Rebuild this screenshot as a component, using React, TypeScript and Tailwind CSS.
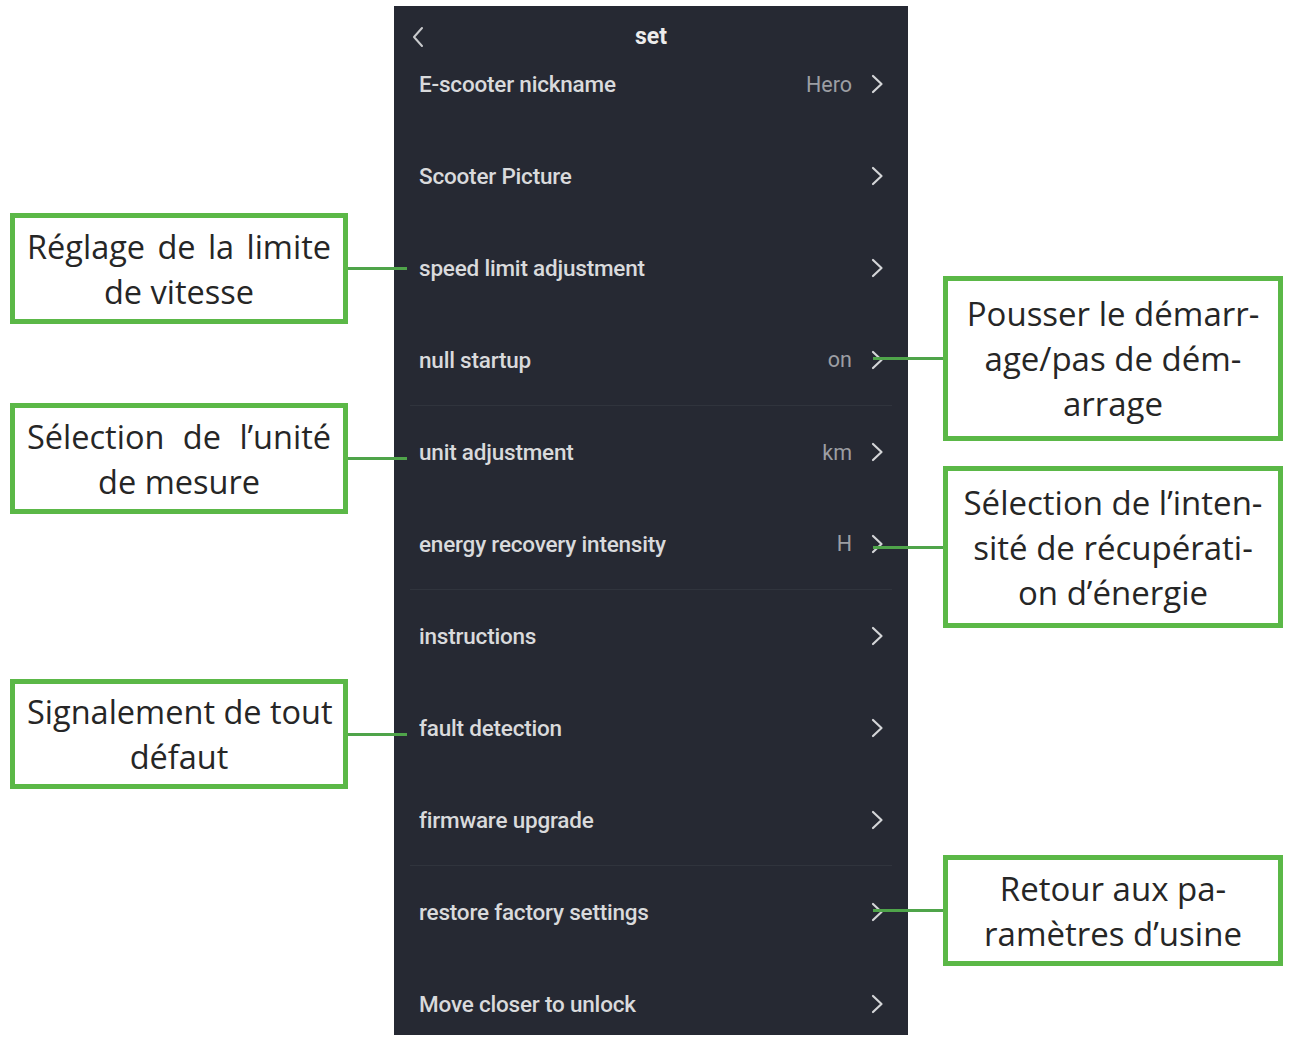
const GREEN = "border-[#5bb847]";

type Row = { label: string; value?: string; divider?: boolean };

const rows: Row[] = [
  { label: "E-scooter nickname", value: "Hero" },
  { label: "Scooter Picture" },
  { label: "speed limit adjustment" },
  { label: "null startup", value: "on", divider: true },
  { label: "unit adjustment", value: "km" },
  { label: "energy recovery intensity", value: "H", divider: true },
  { label: "instructions" },
  { label: "fault detection" },
  { label: "firmware upgrade", divider: true },
  { label: "restore factory settings" },
  { label: "Move closer to unlock" },
];

function Chevron() {
  return (
    <svg width="14" height="20" viewBox="0 0 14 20" className="shrink-0">
      <path d="M3 2 L11.5 10 L3 18" fill="none" stroke="#d4d5d8" strokeWidth="2.2" strokeLinecap="round" strokeLinejoin="round" />
    </svg>
  );
}

function LeftNote({ first, second, top, h }: { first: string; second: string; top: string; h: string }) {
  return (
    <div className={`flex items-center ${top}`}>
      <div className={`ml-[10px] w-[338px] shrink-0 ${h} border-[5px] ${GREEN} bg-white flex flex-col justify-center px-[12px] text-[32.5px] leading-[45px] text-[#262626]`}>
        <div className="text-justify [text-align-last:justify] whitespace-nowrap">{first}</div>
        <div className="text-center">{second}</div>
      </div>
      <div className="relative z-10 w-[59px] h-[3px] bg-[#4fa44a] shrink-0" />
    </div>
  );
}

function RightNote({ lines, top, h }: { lines: string[]; top: string; h: string }) {
  return (
    <div className={`flex items-center ${top}`}>
      <div className="relative z-10 w-[70px] h-[3px] bg-[#4fa44a] shrink-0" />
      <div className={`w-[340px] shrink-0 ${h} border-[5px] ${GREEN} bg-white flex flex-col justify-center items-center text-[33px] leading-[45px] text-[#262626]`}>
        {lines.map((l) => (
          <div key={l} className="whitespace-nowrap">{l}</div>
        ))}
      </div>
    </div>
  );
}

export default function App() {
  return (
    <div className="w-[1289px] h-[1037px] bg-white flex overflow-hidden font-['Open_Sans',sans-serif]">
      {/* left callouts */}
      <div className="w-[394px] shrink-0 flex flex-col">
        <LeftNote first="Réglage de la limite" second="de vitesse" top="mt-[213px]" h="h-[111px]" />
        <LeftNote first="Sélection de l’unité" second="de mesure" top="mt-[79px]" h="h-[111px]" />
        <LeftNote first="Signalement de tout" second="défaut" top="mt-[165px]" h="h-[110px]" />
      </div>

      {/* phone screen */}
      <div className="w-[514px] h-[1029px] mt-[6px] shrink-0 bg-[#262933] overflow-hidden flex flex-col font-['Roboto',sans-serif]">
        <div className="relative h-[32px] shrink-0 flex justify-center items-start pt-[19px]">
          <svg width="14" height="22" viewBox="0 0 14 22" className="absolute left-[17px] top-[20px]">
            <path d="M11 2 L3 11 L11 20" fill="none" stroke="#c9cacd" strokeWidth="2" strokeLinecap="round" strokeLinejoin="round" />
          </svg>
          <span className="text-[23px] leading-none font-bold text-[#ececec]">set</span>
        </div>
        {rows.map((r) => (
          <div key={r.label} className="h-[92px] shrink-0 px-[16px]">
            <div className={`h-full flex items-center pl-[9px] pr-[8px] ${r.divider ? "border-b border-[#30343d]" : ""}`}>
              <span className="flex-1 text-[22.5px] font-medium text-[#d9dadc] tracking-[-0.2px] pt-[2px]">{r.label}</span>
              {r.value && <span className="text-[21.5px] text-[#9c9ea3] mr-[18px] pt-[2px]">{r.value}</span>}
              <Chevron />
            </div>
          </div>
        ))}
      </div>

      {/* right callouts */}
      <div className="-ml-[35px] flex flex-col">
        <RightNote lines={["Pousser le démarr-", "age/pas de dém-", "arrage"]} top="mt-[276px]" h="h-[165px]" />
        <RightNote lines={["Sélection de l’inten-", "sité de récupérati-", "on d’énergie"]} top="mt-[25px]" h="h-[162px]" />
        <RightNote lines={["Retour aux pa-", "ramètres d’usine"]} top="mt-[227px]" h="h-[111px]" />
      </div>
    </div>
  );
}
